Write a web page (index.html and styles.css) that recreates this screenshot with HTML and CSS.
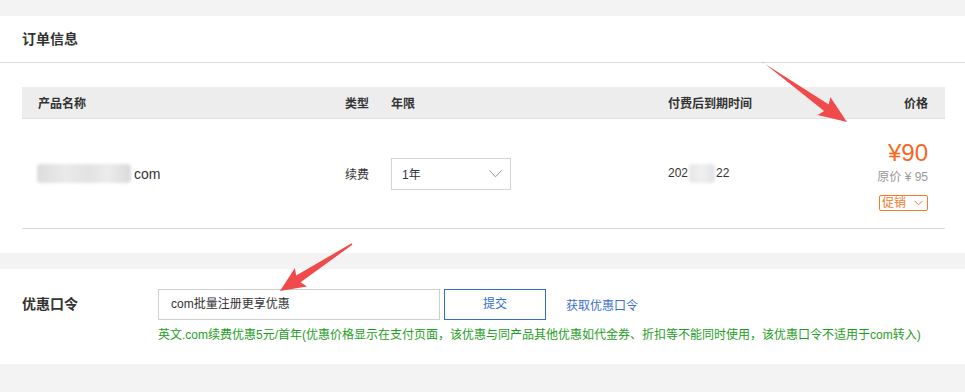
FILE: index.html
```html
<!DOCTYPE html>
<html lang="zh-CN">
<head>
<meta charset="utf-8">
<title>订单信息</title>
<link rel="stylesheet" href="styles.css">
</head>
<body>
<section class="panel order">
  <div class="panel-head">订单信息</div>
  <div class="panel-body">
    <div class="grid thead">
      <div class="c-name">产品名称</div>
      <div>类型</div>
      <div>年限</div>
      <div>付费后到期时间</div>
      <div class="c-price">价格</div>
    </div>
    <div class="grid trow">
      <div class="c-name name"><span class="blur blur-name"></span>com</div>
      <div>续费</div>
      <div>
        <div class="select">
          <span>1年</span>
          <svg class="chev" width="13" height="8" viewBox="0 0 13 8"><polyline points="0.5,0.5 6.5,6.8 12.5,0.5" fill="none" stroke="#999" stroke-width="1"/></svg>
        </div>
      </div>
      <div class="date">202<span class="blur blur-date"></span>22</div>
      <div class="c-price price">
        <div class="now">¥90</div>
        <div class="orig">原价 ¥ 95</div>
        <div class="tag">促销<svg width="9" height="6" viewBox="0 0 9 6"><polyline points="0.5,0.8 4.5,4.8 8.5,0.8" fill="none" stroke="#f57a2a" stroke-width="1"/></svg></div>
      </div>
    </div>
  </div>
</section>

<section class="panel coupon">
  <div class="label">优惠口令</div>
  <div class="coupon-main">
    <div class="coupon-row">
      <div class="input">com批量注册更享优惠</div>
      <div class="btn">提交</div>
      <a class="link">获取优惠口令</a>
    </div>
    <div class="hint">英文.com续费优惠5元/首年(优惠价格显示在支付页面，该优惠与同产品其他优惠如代金券、折扣等不能同时使用，该优惠口令不适用于com转入)</div>
  </div>
</section>

<svg class="arrows" width="965" height="392" viewBox="0 0 965 392">
  <polygon fill="#f04a4b" points="762,61.4 824.1,111 817.7,115 847,122 830.3,97 828.8,104.5 762.8,62.6"/>
  <polygon fill="#f04a4b" points="352.4,244.7 300.6,282.2 306.9,286.5 280,291 294.9,268.1 296.2,275.6 351.6,243.3"/>
</svg>
</body>
</html>
```

FILE: styles.css
```css
* { box-sizing: border-box; }
html, body { margin: 0; }
body {
  position: relative;
  width: 965px;
  height: 392px;
  overflow: hidden;
  background: #f3f3f3;
  padding-top: 16px;
  font-family: "Liberation Sans", "Noto Sans CJK SC", sans-serif;
  font-size: 12px;
  color: #333;
}
.panel { background: #fff; }
.panel-head {
  height: 47px;
  line-height: 46px;
  padding-left: 22px;
  font-size: 14px;
  font-weight: bold;
  border-bottom: 1px solid #dcdcdc;
}
.panel-body { padding: 24px 20px 24px 22px; }
.grid {
  display: grid;
  grid-template-columns: 323px 46px 277px 1fr auto;
  align-items: center;
}
.thead {
  height: 32px;
  background: #ededed;
  border-bottom: 1px solid #e2e2e2;
  font-weight: bold;
  color: #333;
}
.c-name { padding-left: 16px; }
.c-price { padding-right: 17px; text-align: right; }
.trow {
  height: 110px;
  border-bottom: 1px solid #dcdcdc;
}
.name { font-size: 14px; display: flex; align-items: center; padding-left: 15px; }
.blur {
  display: inline-block;
  background: linear-gradient(90deg, #dcdcdc, #eaeaea 30%, #e2e2e2 55%, #ececec 75%, #dadada);
  filter: blur(1.5px);
  border-radius: 4px;
}
.blur-name { width: 94px; height: 19px; margin-right: 3px; }
.blur-date { width: 26px; height: 19px; vertical-align: middle; margin: 0 1px; background: linear-gradient(90deg,#e6e6e6,#f0f0f0 50%,#dfe2e6); }
.date { font-size: 12px; }
.select {
  width: 120px;
  height: 32px;
  border: 1px solid #d4d4d4;
  display: flex;
  align-items: center;
  justify-content: space-between;
  padding: 0 8px 0 10px;
}
.chev { margin-top: 1px; }
.price { display: flex; flex-direction: column; align-items: flex-end; padding-top: 2px; }
.now { font-size: 24px; line-height: 28px; color: #f5681e; }
.orig { color: #999; line-height: 16px; margin-top: 2px; }
.tag {
  margin-top: 10px;
  width: 49px;
  height: 16px;
  border: 1px solid #f57a2a;
  border-radius: 2px;
  color: #f57a2a;
  font-size: 12px;
  line-height: 14px;
  display: flex;
  align-items: center;
  justify-content: space-between;
  padding: 0 4px 0 2px;
}
.coupon {
  margin-top: 16px;
  height: 95px;
  display: flex;
  padding-top: 20px;
}
.label {
  width: 158px;
  flex-shrink: 0;
  padding-left: 22px;
  font-size: 14px;
  font-weight: bold;
  line-height: 31px;
}
.coupon-row { display: flex; align-items: center; }
.input {
  width: 282px;
  height: 31px;
  border: 1px solid #cfcfcf;
  line-height: 29px;
  padding-left: 12px;
  color: #333;
}
.btn {
  margin-left: 4px;
  width: 102px;
  height: 31px;
  border: 1px solid #2f6fcb;
  color: #2f6fcb;
  text-align: center;
  line-height: 29px;
}
.link { margin-left: 20px; color: #3b6fd1; cursor: pointer; }
.hint {
  margin-top: 7px;
  line-height: 16px;
  color: #1e9e1e;
  white-space: nowrap;
}
.arrows { position: absolute; left: 0; top: 0; pointer-events: none; }
```
